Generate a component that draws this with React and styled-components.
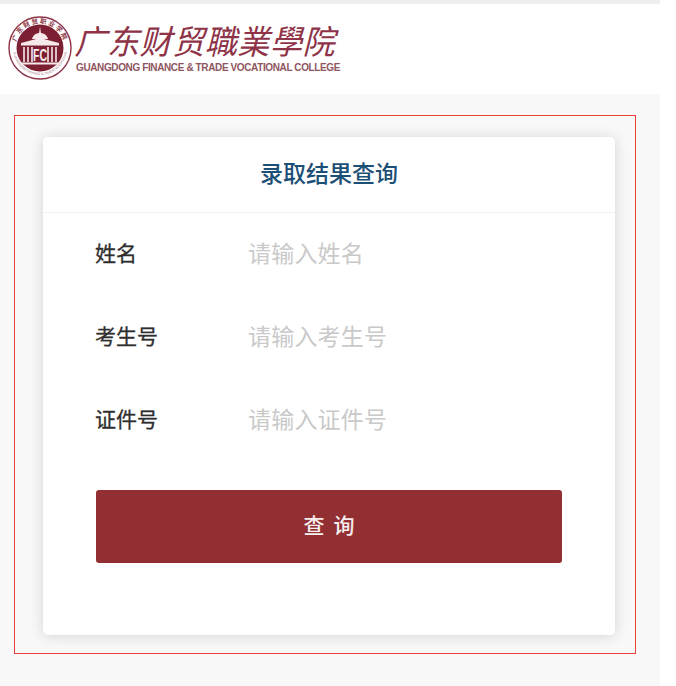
import React from "react";
import styled, { createGlobalStyle } from "styled-components";

const GlobalStyle = createGlobalStyle`
  html, body {
    margin: 0;
    padding: 0;
    background: #fff;
  }
  body {
    font-family: "Noto Sans CJK SC", "Noto Sans", sans-serif;
  }
`;

const Page = styled.div`
  width: 660px;
  height: 686px;
  overflow: hidden;
  background: #f8f8f9;
  display: flex;
  flex-direction: column;
`;

const TopStrip = styled.div`
  height: 4px;
  background: #eeeeee;
  flex-shrink: 0;
`;

const Header = styled.header`
  height: 90px;
  background: #fff;
  display: flex;
  align-items: center;
  gap: 3px;
  padding: 0 0 2px 7px;
  box-sizing: border-box;
  flex-shrink: 0;
`;

const LogoText = styled.div`
  display: flex;
  flex-direction: column;
  gap: 4px;
  padding-top: 6px;
`;

const SchoolName = styled.div`
  font-size: 32px;
  line-height: 38px;
  height: 38px;
  color: #8e3348;
  letter-spacing: 0.6px;
  font-weight: 400;
  transform: skewX(-14deg) scaleY(1.04);
  transform-origin: left center;
  white-space: nowrap;
  margin-top: -8px;
  padding-left: 2px;
`;

const SchoolNameEn = styled.div`
  font-family: "Liberation Sans", Arial, sans-serif;
  font-size: 10px;
  line-height: 12px;
  font-weight: 700;
  color: #8f5560;
  white-space: nowrap;
  letter-spacing: -0.38px;
`;

const Frame = styled.div`
  width: 622px;
  height: 539px;
  margin: 21px 0 0 14px;
  box-sizing: border-box;
  border: 1px solid #e8403e;
  padding: 21px 20px 0 28px;
  flex-shrink: 0;
`;

const Card = styled.main`
  width: 572px;
  height: 498px;
  background: #fff;
  border-radius: 5px;
  box-shadow: 0 1px 14px rgba(0, 0, 0, 0.15);
  display: flex;
  flex-direction: column;
`;

const CardTitle = styled.h1`
  margin: 0;
  height: 76px;
  flex-shrink: 0;
  box-sizing: border-box;
  border-bottom: 1px solid #f1f1f2;
  padding-bottom: 6px;
  display: flex;
  align-items: center;
  justify-content: center;
  font-size: 23px;
  font-weight: 500;
  color: #1c4f75;
`;

const Form = styled.form`
  padding: 0 53px;
  display: flex;
  flex-direction: column;
`;

const Fields = styled.div`
  display: flex;
  flex-direction: column;
  gap: 41px;
  padding-top: 18px;
`;

const Field = styled.label`
  display: flex;
  align-items: center;
  height: 42px;
  margin-left: -1px;
`;

const FieldLabel = styled.span`
  width: 153px;
  flex-shrink: 0;
  font-size: 21px;
  color: #2e2e2e;
  -webkit-text-stroke: 0.3px #2e2e2e;
`;

const FieldInput = styled.input`
  flex: 1;
  min-width: 0;
  border: none;
  outline: none;
  padding: 0;
  background: transparent;
  font-family: inherit;
  font-size: 23px;
  letter-spacing: 0.2px;
  color: #333;
  &::placeholder {
    color: #c9c9c9;
    opacity: 1;
  }
`;

const SubmitButton = styled.button`
  margin-top: 51px;
  height: 73px;
  width: 466px;
  border: none;
  border-radius: 3px;
  background: #922f32;
  color: #f6eeee;
  font-family: inherit;
  font-size: 21px;
  font-weight: 500;
  letter-spacing: 9px;
  padding: 0 0 6px 9px;
`;

const pillars = [17, 21, 25, 41, 45, 49];

const Emblem = () => (
  <svg width="66" height="66" viewBox="0 0 66 66" aria-label="AFCA">
    <defs>
      <path id="ringTop" d="M8.5 33a24.5 24.5 0 0 1 49 0" />
      <path id="ringBottom" d="M6 33a27 27 0 0 0 54 0" />
    </defs>
    <circle cx="33" cy="33" r="31" fill="#fff" stroke="#8d3346" strokeWidth="1.4" />
    <text fontSize="6.4" fontWeight="700" fill="#8d3346" letterSpacing="1.6">
      <textPath href="#ringTop" startOffset="8%">广东财贸职业学院</textPath>
    </text>
    <text fontSize="3.4" fill="#a8727e" fontFamily="Liberation Sans, sans-serif">
      <textPath href="#ringBottom" startOffset="5%">GUANGDONG FINANCE &amp; TRADE VOCATIONAL</textPath>
    </text>
    <circle cx="33" cy="33" r="23.5" fill="#7c1f33" />
    <path d="M33 11.5l1 7h-2z" fill="#f5e9ea" />
    <path d="M25 24c1-4 4-6 8-6s7 2 8 6z" fill="#f5e9ea" />
    <path d="M14 28l19-5 19 5v2.6H14z" fill="#f5e9ea" />
    <path d="M15 47.5h36v2H15z" fill="#f5e9ea" />
    {pillars.map(x => (
      <path key={x} d={`M${x} 32v15`} stroke="#f5e9ea" strokeWidth="1.6" />
    ))}
    <text x="33" y="46" textAnchor="middle" fontSize="16" fontWeight="700" fill="#f7eeee" fontFamily="Liberation Sans, sans-serif" textLength="14" lengthAdjust="spacingAndGlyphs">FC</text>
  </svg>
);

export default function App() {
  return (
    <>
      <GlobalStyle />
      <Page>
        <TopStrip />
        <Header>
          <Emblem />
          <LogoText>
            <SchoolName>广东财贸職業學院</SchoolName>
            <SchoolNameEn>GUANGDONG FINANCE &amp; TRADE VOCATIONAL COLLEGE</SchoolNameEn>
          </LogoText>
        </Header>
        <Frame>
          <Card>
            <CardTitle>录取结果查询</CardTitle>
            <Form onSubmit={e => e.preventDefault()}>
              <Fields>
                <Field>
                  <FieldLabel>姓名</FieldLabel>
                  <FieldInput placeholder="请输入姓名" />
                </Field>
                <Field>
                  <FieldLabel>考生号</FieldLabel>
                  <FieldInput placeholder="请输入考生号" />
                </Field>
                <Field>
                  <FieldLabel>证件号</FieldLabel>
                  <FieldInput placeholder="请输入证件号" />
                </Field>
              </Fields>
              <SubmitButton type="submit">查询</SubmitButton>
            </Form>
          </Card>
        </Frame>
      </Page>
    </>
  );
}
